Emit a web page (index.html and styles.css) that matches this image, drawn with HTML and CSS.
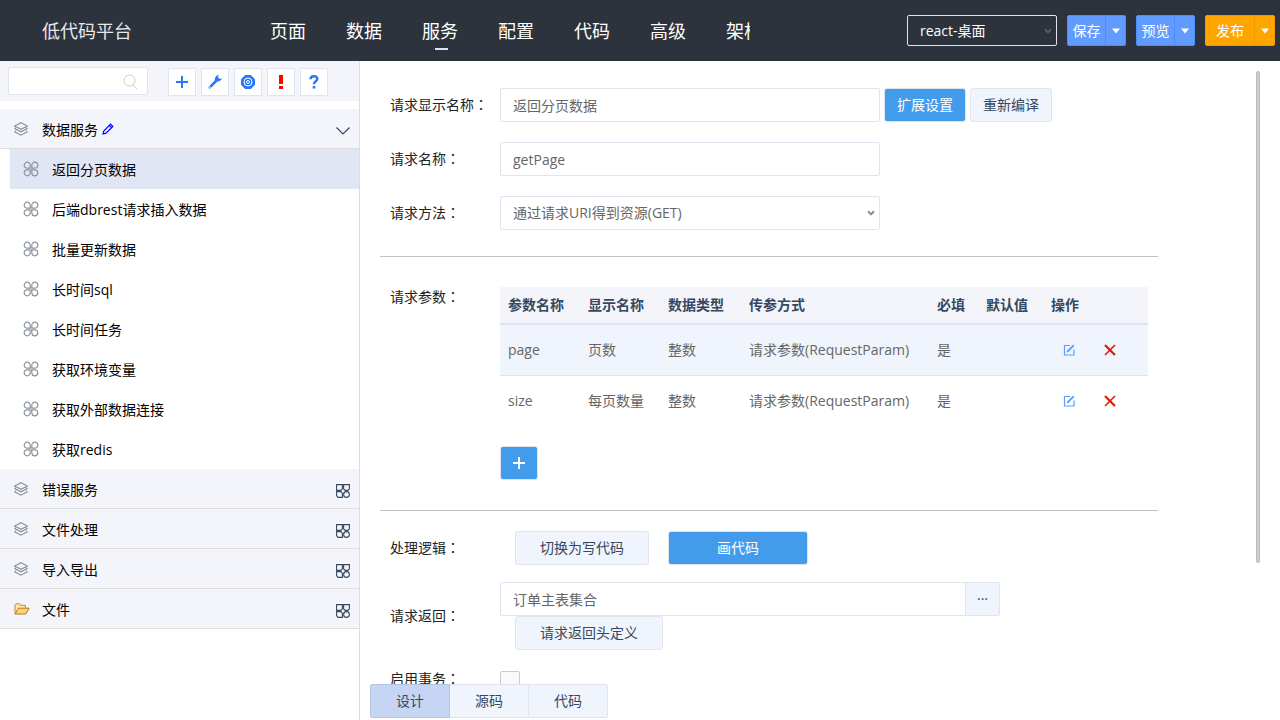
FILE: index.html
```html
<!DOCTYPE html>
<html lang="zh-CN">
<head>
  <meta charset="UTF-8" />
  <meta name="viewport" content="width=device-width, initial-scale=1.0"/>
  <title>低代码平台</title>
  <link rel="stylesheet" href="styles.css">
</head>
<body>

  <!-- Icon symbols -->
  <svg class="symbols" aria-hidden="true">
    <symbol id="i-layers" viewBox="0 0 14 14">
      <path d="M7 .7 13.400 4 7 7.300 .6 4z M.6 6.500 2 5.800M13.400 6.500 12 5.800 M.6 6.500 7 9.800 13.400 6.500 M.6 9.800 2 9.100M13.400 9.800 12 9.100 M.6 9.800 7 13.200 13.400 9.800" fill="none" stroke="#868d97" stroke-width="1.100"/>
    </symbol>
    <symbol id="i-clover" viewBox="0 0 16 16">
      <g fill="none" stroke="#8d949d" stroke-width="1.200">
        <path d="M7.200 7.200H4.200A3 3 0 1 1 7.200 4.200z"/>
        <path d="M8.800 7.200V4.200A3 3 0 1 1 11.800 7.200z"/>
        <path d="M7.200 8.800V11.800A3 3 0 1 1 4.200 8.800z"/>
        <path d="M8.800 8.800H11.800A3 3 0 1 1 8.800 11.800z"/>
      </g>
    </symbol>
    <symbol id="i-grid" viewBox="0 0 14 14">
      <g fill="none" stroke="#36485f" stroke-width="1.100">
        <path d="M.6.6H6.400V4.800L4.800 6.400H.6z M7.600.6H13.400V4.800L11.800 6.400H9.200L7.600 4.800z M.6 7.600H4.800L6.400 9.200V13.400H2.200L.6 11.800z"/>
        <circle cx="10.500" cy="10.500" r="2.900"/>
      </g>
    </symbol>
    <symbol id="i-folder" viewBox="0 0 16 12">
      <path d="M1 10.500V2.200L2.200.8H5.400L6.600 2.300H11.400V5" fill="#ffe9a8" stroke="#c68a22"/>
      <path d="M1 11 4.400 5.200H15L11.800 11z" fill="#fbd477" stroke="#b9741b"/>
    </symbol>
    <symbol id="i-edit" viewBox="0 0 12 12">
      <path d="M7 1.500H1.500V11H11V5.500" fill="none" stroke="#5c9dff" stroke-width="1.200"/>
      <path d="M3.600 8.600 4 6.700 10.100.6 11.400 1.900 5.400 8z" fill="#5c9dff"/>
    </symbol>
    <symbol id="i-remove" viewBox="0 0 12 12">
      <path d="M1 1 11 11" fill="none" stroke="#d81e06" stroke-width="2.200"/>
      <path d="M11 1 1 11" fill="none" stroke="#d81e06" stroke-width="1.600"/>
    </symbol>
    <symbol id="i-plus" viewBox="0 0 12 12">
      <path d="M6 0V12M0 6H12" fill="none" stroke="currentColor" stroke-width="2"/>
    </symbol>
    <symbol id="i-down" viewBox="0 0 8 6">
      <path d="M1 1.200 4 4.400 7 1.200" fill="none" stroke="currentColor" stroke-width="2"/>
    </symbol>
    <symbol id="i-caret" viewBox="0 0 8 6">
      <path d="M0 .5H8L4 5.500z" fill="#fff"/>
    </symbol>
  </svg>

  <!-- Top bar -->
  <header class="top-bar">
    <div class="logo">低代码平台</div>
    <nav class="main-nav">
      <a href="#">页面</a>
      <a href="#">数据</a>
      <a href="#" class="active">服务</a>
      <a href="#">配置</a>
      <a href="#">代码</a>
      <a href="#">高级</a>
      <a href="#">架构</a>
    </nav>
    <div class="top-actions">
      <div class="select-box platform">
        <select aria-label="平台">
          <option>react-桌面</option>
        </select>
        <svg class="arrow"><use href="#i-down"/></svg>
      </div>
      <div class="split-btn">
        <button type="button">保存</button>
        <button type="button" class="caret" aria-label="更多保存"><svg><use href="#i-caret"/></svg></button>
      </div>
      <div class="split-btn">
        <button type="button">预览</button>
        <button type="button" class="caret" aria-label="更多预览"><svg><use href="#i-caret"/></svg></button>
      </div>
      <div class="split-btn publish">
        <button type="button">发布</button>
        <button type="button" class="caret" aria-label="更多发布"><svg><use href="#i-caret"/></svg></button>
      </div>
    </div>
  </header>

  <div class="page">
    <!-- Service tree -->
    <aside class="sidebar">
      <div class="toolbar">
        <div class="search">
          <input type="text" aria-label="搜索">
          <svg viewBox="0 0 15 16"><circle cx="6.500" cy="6.500" r="5.500"/><path d="M9.500 10.500 14 15"/></svg>
        </div>
        <div class="tools">
          <button type="button" aria-label="新增"><svg width="12" height="12"><use href="#i-plus"/></svg></button>
          <button type="button" aria-label="工具">
            <svg width="16" height="16" viewBox="0 0 16 16">
              <path d="M2.700 13.300 9.500 6.500" fill="none" stroke="currentColor" stroke-width="2.600" stroke-linecap="round"/>
              <path d="M11.800 1A4 4 0 0 0 8 6.200 4 4 0 0 0 14.900 4.200L12.800 5 11 3.300z" fill="currentColor"/>
              <circle cx="2.700" cy="13.300" r=".8" fill="#fff"/>
            </svg>
          </button>
          <button type="button" aria-label="设置">
            <svg width="14" height="14" viewBox="0 0 14 14">
              <path d="M4.200 0H9.800L14 4.200V9.800L9.800 14H4.200L0 9.800V4.200z" fill="currentColor"/>
              <circle cx="7" cy="7" r="4" fill="none" stroke="#fff"/>
              <circle cx="7" cy="7" r="1.500" fill="none" stroke="#fff"/>
            </svg>
          </button>
          <button type="button" class="warn" aria-label="错误">
            <svg width="4" height="14" viewBox="0 0 4 14"><path d="M0 0H4V9H0z M0 11H4V14H0z" fill="currentColor"/></svg>
          </button>
          <button type="button" aria-label="帮助">
            <svg width="10" height="14" viewBox="0 0 10 14">
              <path d="M1.500 4.200C1.500 .3 8.300 .2 8.300 3.800 8.300 6.200 5 6.400 5 9.300" fill="none" stroke="currentColor" stroke-width="2.400"/>
              <path d="M3.700 11H6.400V13.500H3.700z" fill="currentColor"/>
            </svg>
          </button>
        </div>
      </div>

      <div class="tree">
        <div class="group">
          <svg class="group-icon"><use href="#i-layers"/></svg>
          <span>数据服务</span>
          <svg class="pen" viewBox="0 0 12 12"><path d="M1 11 1.800 8 8.600 1.200 10.800 3.400 4 10.200z M7.300 2.500 9.500 4.700" fill="none" stroke="#00f" stroke-width="1.200"/></svg>
          <svg class="toggle" viewBox="0 0 14 14"><path d="M.5 3.500 7 10 13.500 3.500" fill="none" stroke="#36485f" stroke-width="1.200"/></svg>
        </div>
        <ul class="items">
          <li class="selected"><svg><use href="#i-clover"/></svg><a href="#">返回分页数据</a></li>
          <li><svg><use href="#i-clover"/></svg><a href="#">后端dbrest请求插入数据</a></li>
          <li><svg><use href="#i-clover"/></svg><a href="#">批量更新数据</a></li>
          <li><svg><use href="#i-clover"/></svg><a href="#">长时间sql</a></li>
          <li><svg><use href="#i-clover"/></svg><a href="#">长时间任务</a></li>
          <li><svg><use href="#i-clover"/></svg><a href="#">获取环境变量</a></li>
          <li><svg><use href="#i-clover"/></svg><a href="#">获取外部数据连接</a></li>
          <li><svg><use href="#i-clover"/></svg><a href="#">获取redis</a></li>
        </ul>
        <div class="group">
          <svg class="group-icon"><use href="#i-layers"/></svg>
          <span>错误服务</span>
          <svg class="toggle"><use href="#i-grid"/></svg>
        </div>
        <div class="group">
          <svg class="group-icon"><use href="#i-layers"/></svg>
          <span>文件处理</span>
          <svg class="toggle"><use href="#i-grid"/></svg>
        </div>
        <div class="group">
          <svg class="group-icon"><use href="#i-layers"/></svg>
          <span>导入导出</span>
          <svg class="toggle"><use href="#i-grid"/></svg>
        </div>
        <div class="group">
          <svg class="group-icon folder"><use href="#i-folder"/></svg>
          <span>文件</span>
          <svg class="toggle"><use href="#i-grid"/></svg>
        </div>
      </div>
    </aside>

    <!-- Service editor -->
    <main class="editor">
      <div class="scroll-area">
        <form class="service-form">
          <section>
            <div class="row">
              <label for="display-name">请求显示名称<span class="colon" lang="zh-Hant">：</span></label>
              <input type="text" id="display-name" class="field" value="返回分页数据">
              <div class="row-buttons">
                <button type="button" class="btn primary">扩展设置</button>
                <button type="button" class="btn">重新编译</button>
              </div>
            </div>
            <div class="row">
              <label for="name">请求名称<span class="colon" lang="zh-Hant">：</span></label>
              <input type="text" id="name" class="field" value="getPage">
            </div>
            <div class="row">
              <label for="method">请求方法<span class="colon" lang="zh-Hant">：</span></label>
              <div class="select-box field-select">
                <select id="method" class="field">
                  <option>通过请求URI得到资源(GET)</option>
                </select>
                <svg class="arrow"><use href="#i-down"/></svg>
              </div>
            </div>
          </section>

          <section class="params">
            <div class="row top">
              <span class="label">请求参数<span class="colon" lang="zh-Hant">：</span></span>
              <div class="params-body">
                <table>
                  <colgroup>
                    <col class="c-name"><col class="c-name"><col class="c-type"><col class="c-mode">
                    <col class="c-required"><col class="c-default"><col>
                  </colgroup>
                  <thead>
                    <tr>
                      <th>参数名称</th><th>显示名称</th><th>数据类型</th><th>传参方式</th>
                      <th>必填</th><th>默认值</th><th>操作</th>
                    </tr>
                  </thead>
                  <tbody>
                    <tr class="current">
                      <td>page</td><td>页数</td><td>整数</td><td>请求参数(RequestParam)</td>
                      <td>是</td><td></td>
                      <td class="ops">
                        <button type="button" aria-label="编辑"><svg><use href="#i-edit"/></svg></button>
                        <button type="button" aria-label="删除"><svg><use href="#i-remove"/></svg></button>
                      </td>
                    </tr>
                    <tr>
                      <td>size</td><td>每页数量</td><td>整数</td><td>请求参数(RequestParam)</td>
                      <td>是</td><td></td>
                      <td class="ops">
                        <button type="button" aria-label="编辑"><svg><use href="#i-edit"/></svg></button>
                        <button type="button" aria-label="删除"><svg><use href="#i-remove"/></svg></button>
                      </td>
                    </tr>
                  </tbody>
                </table>
                <button type="button" class="btn primary add" aria-label="新增参数"><svg width="12" height="12"><use href="#i-plus"/></svg></button>
              </div>
            </div>
          </section>

          <section class="logic">
            <div class="row">
              <span class="label">处理逻辑<span class="colon" lang="zh-Hant">：</span></span>
              <div class="logic-buttons">
                <button type="button" class="btn wide">切换为写代码</button>
                <button type="button" class="btn primary wide draw">画代码</button>
              </div>
            </div>
            <div class="row">
              <label for="result">请求返回<span class="colon" lang="zh-Hant">：</span></label>
              <div class="result">
                <div class="input-group">
                  <input type="text" id="result" class="field" value="订单主表集合">
                  <button type="button" class="btn">···</button>
                </div>
                <button type="button" class="btn wide">请求返回头定义</button>
              </div>
            </div>
            <div class="row check-row">
              <label for="transaction">启用事务<span class="colon" lang="zh-Hant">：</span></label>
              <input type="checkbox" id="transaction">
            </div>
          </section>
        </form>
        <div class="scroll-thumb"></div>
      </div>

      <div class="view-tabs">
        <button type="button" class="active">设计</button>
        <button type="button">源码</button>
        <button type="button">代码</button>
      </div>
    </main>
  </div>

</body>
</html>
```

FILE: styles.css
```css
* {
  box-sizing: border-box;
  margin: 0;
  padding: 0;
}

body {
  display: flex;
  flex-direction: column;
  height: 100vh;
  overflow: hidden;
  background: #fff;
  color: #000;
  font: 14px/20px "Open Sans", "Noto Sans CJK SC", sans-serif;
}

button, input, select {
  font: inherit;
  color: inherit;
}

button {
  cursor: pointer;
}

a {
  color: inherit;
  text-decoration: none;
}

svg {
  display: block;
  flex: none;
}

.symbols {
  position: absolute;
  width: 0;
  height: 0;
}

/* Top bar */
.top-bar {
  display: flex;
  align-items: center;
  flex: none;
  height: 61px;
  padding-right: 5px;
  background: #2d333d;
  color: #fff;
}

.logo {
  flex: none;
  width: 250px;
  padding-left: 42px;
  font-size: 18px;
  color: #e6e8ea;
}

.main-nav {
  display: flex;
  width: 500px;
  overflow: hidden;
  font-size: 18px;
}

.main-nav a {
  flex: none;
  padding: 0 20px;
  line-height: 58px;
}

.main-nav .active {
  position: relative;
}

.main-nav .active::after {
  content: "";
  position: absolute;
  left: 50%;
  bottom: 10px;
  width: 13px;
  height: 2px;
  margin-left: -5px;
  background: #dfe4f0;
}

.top-actions {
  display: flex;
  gap: 10px;
  margin-left: auto;
}

.select-box {
  position: relative;
}

.select-box select {
  width: 100%;
  appearance: none;
}

.select-box .arrow {
  position: absolute;
  right: 5px;
  top: 50%;
  width: 8px;
  height: 6px;
  margin-top: -3px;
  color: #8d8d8d;
  pointer-events: none;
}

.platform {
  width: 150px;
}

.platform select {
  height: 31px;
  padding: 0 12px;
  border: 1px solid #dfe4f0;
  border-radius: 2px;
  background: #2d333d;
}

.platform .arrow {
  color: #555a60;
}

.split-btn {
  display: flex;
}

.split-btn button {
  width: 39px;
  height: 31px;
  border: 1px solid #4c8dfb;
  border-radius: 2px 0 0 2px;
  background: #619bff;
  color: #fff;
}

.caret svg {
  width: 8px;
  height: 6px;
  margin: 0 auto;
}

.publish button {
  width: 50px;
  border-color: #ee9a00;
  background: #ffa500;
}

.split-btn .caret {
  width: 21px;
  margin-left: -1px;
  border-radius: 0 2px 2px 0;
}

/* Sidebar */
.page {
  display: flex;
  flex: 1;
  min-height: 0;
}

.sidebar {
  flex: none;
  width: 360px;
  border-right: 1px solid #ddd;
}

.toolbar {
  display: flex;
  align-items: center;
  gap: 20px;
  height: 40px;
  padding: 0 8px;
  background: #f4f5fb;
}

.search {
  position: relative;
  width: 140px;
}

.search input {
  display: block;
  width: 100%;
  height: 28px;
  padding: 0 30px 0 8px;
  border: 1px solid #dfe4f0;
  border-radius: 2px;
  background: #fff;
}

.search svg {
  position: absolute;
  right: 10px;
  top: 7px;
  width: 15px;
  height: 16px;
  fill: none;
  stroke: #ccc;
}

.tools {
  display: flex;
  gap: 5px;
  padding-top: 2px;
}

.tools button {
  display: flex;
  align-items: center;
  justify-content: center;
  width: 28px;
  height: 28px;
  border: 1px solid #dfe4f0;
  background: #fff;
  color: #2878ff;
}

.tools .warn {
  color: #f00;
}

.tree {
  margin-top: 8px;
}

.group {
  display: flex;
  align-items: center;
  height: 40px;
  padding: 0 9px 0 14px;
  border-bottom: 1px solid #ddd;
  background: #f4f5fb;
}

.group span, .items a {
  padding-top: 2px;
}

.group-icon {
  width: 14px;
  height: 14px;
  margin-right: 14px;
}

.folder {
  width: 16px;
  height: 12px;
  margin-right: 12px;
}

.pen {
  width: 12px;
  height: 12px;
  margin-left: 4px;
}

.toggle {
  width: 14px;
  height: 18px;
  margin-left: auto;
  padding-top: 4px;
}

.items {
  padding-left: 10px;
  list-style: none;
}

.items li {
  display: flex;
  align-items: center;
  gap: 13px;
  height: 40px;
  padding-left: 13px;
}

.items svg {
  width: 16px;
  height: 16px;
}

.items .selected {
  background: #e0e6f4;
}

/* Editor */
.editor {
  display: flex;
  flex: 1;
  flex-direction: column;
  min-width: 0;
}

.scroll-area {
  position: relative;
  flex: 1;
  min-height: 0;
  overflow: hidden;
}

.scroll-thumb {
  position: absolute;
  top: 10px;
  right: 20px;
  width: 4px;
  height: 79%;
  border: 1px solid #bbb;
  border-radius: 2px;
  background: #ccc;
}

.service-form {
  margin: 27px 122px 0 20px;
}

.row {
  display: flex;
  align-items: center;
  margin-bottom: 20px;
  padding: 0 10px;
}

.row.top {
  align-items: flex-start;
}

.row label, .row .label {
  flex: none;
  width: 110px;
  color: #222;
}

/* Traditional glyph keeps the colon in the middle of its box */
.colon {
  font-family: "Noto Sans CJK TC", sans-serif;
  line-height: 1;
}

.field {
  width: 380px;
  height: 34px;
  padding: 0 12px;
  border: 1px solid #dfe4f0;
  border-radius: 2px;
  background: #fff;
  color: #666;
}

.field-select {
  width: 380px;
}

.btn {
  height: 34px;
  padding: 0 12px;
  border: 1px solid #dfe4f0;
  border-radius: 3px;
  background: #eff4fd;
  color: #36485f;
}

.btn.primary {
  background: #429ceb;
  color: #fff;
}

.btn.wide {
  padding: 0 24px;
}

.row-buttons {
  display: flex;
  gap: 4px;
  margin-left: 4px;
}

.params, .logic {
  border-top: 1px solid #c3c3c3;
}

.params {
  margin-top: 26px;
  padding-top: 30px;
}

.params .row {
  margin-bottom: 30px;
}

.params-body {
  flex: 1;
}

table {
  width: 100%;
  table-layout: fixed;
  border-collapse: collapse;
}

.c-name {
  width: 80px;
}

.c-type {
  width: 81px;
}

.c-mode {
  width: 188px;
}

.c-required {
  width: 49px;
}

.c-default {
  width: 65px;
}

th, td {
  padding: 0 8px;
  text-align: left;
  white-space: nowrap;
}

th {
  height: 37px;
  border-bottom: 2px solid #dfe4f0;
  background: #f4f5fb;
  color: #36485f;
}

td {
  height: 51px;
  color: #666;
}

.current td {
  border-bottom: 1px solid #dfe4f0;
  background: #eff4fd;
}

.ops {
  font-size: 0;
}

.ops button {
  width: 36px;
  height: 20px;
  margin-right: 5px;
  border: none;
  background: none;
  vertical-align: middle;
}

.ops button + button {
  margin: 0;
}

.ops svg {
  width: 12px;
  height: 12px;
  margin: 0 auto;
}

.add {
  display: block;
  margin-top: 20px;
}

.logic {
  padding-top: 20px;
}

.logic .row {
  margin-bottom: 17px;
}

.logic-buttons {
  display: flex;
  gap: 19px;
  margin-left: 15px;
}

.draw {
  width: 140px;
}

.result {
  width: 500px;
}

.result > .btn {
  display: block;
  margin-left: 15px;
}

.input-group {
  display: flex;
}

.input-group .field {
  flex: 1;
  width: auto;
  border-radius: 2px 0 0 2px;
}

.input-group .btn {
  width: 35px;
  padding: 0;
  margin-left: -1px;
  border-radius: 0 2px 2px 0;
}

.check-row {
  align-items: flex-start;
}

.check-row input {
  width: 20px;
  height: 20px;
  margin-top: 4px;
  border: 1px solid #ccc;
  border-radius: 2px;
  background: #fafafa;
  appearance: none;
}

.check-row label {
  padding-top: 2px;
}

/* Bottom tabs */
.view-tabs {
  display: flex;
  flex: none;
  padding: 0 10px 2px;
}

.view-tabs button {
  width: 80px;
  height: 34px;
  margin-right: -1px;
  border: 1px solid #dfe4f0;
  background: #eff4fd;
  color: #36485f;
}

.view-tabs .active {
  position: relative;
  border-color: #b3c4e0;
  border-radius: 2px 0 0 2px;
  background: #c5d5f3;
}

.view-tabs button:last-child {
  border-radius: 0 2px 2px 0;
}
```
